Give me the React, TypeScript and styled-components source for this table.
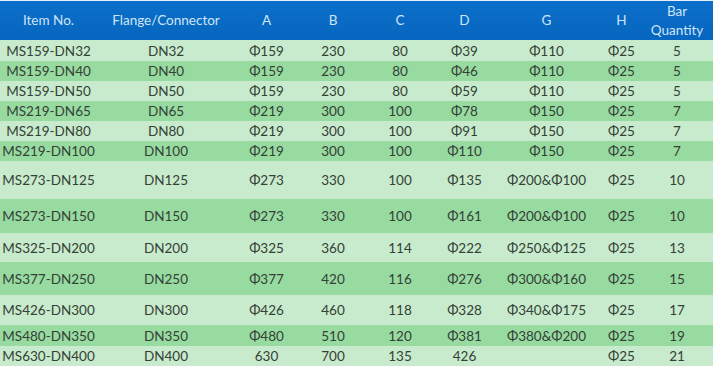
import React from "react";
import styled, { createGlobalStyle } from "styled-components";

const Global = createGlobalStyle`
  html, body { margin: 0; padding: 0; background: #ffffff; }
  body { font-family: "Lato", "Open Sans", sans-serif; }
`;

const COLS = "97px 138px 63px 70px 64px 65px 99px 51px 66px";

const Table = styled.div`
  width: 713px;
  display: flex;
  flex-direction: column;
  border-top: 1px solid #e8f2fa;
`;

const HeaderRow = styled.div`
  display: grid;
  grid-template-columns: ${COLS};
  height: 39px;
  background: linear-gradient(#0b6fc9, #0766bf);
`;

const HeadCell = styled.div<{ $pr?: number }>`
  display: flex;
  align-items: center;
  justify-content: center;
  text-align: center;
  color: #cfe5f6;
  font-size: 13.5px;
  line-height: 19px;
  padding-right: ${(p) => p.$pr ?? 0}px;
`;

const Row = styled.div<{ $h: number; $dark: boolean }>`
  display: grid;
  grid-template-columns: ${COLS};
  height: ${(p) => p.$h}px;
  background: ${(p) => (p.$dark ? "#97dba1" : "#c7ebcc")};
`;

const Cell = styled.div<{ $pr?: number }>`
  display: flex;
  align-items: center;
  justify-content: center;
  color: #354036;
  font-size: 13.5px;
  white-space: nowrap;
  padding-right: ${(p) => p.$pr ?? 0}px;
`;

const headers = ["Item No.", "Flange/Connector", "A", "B", "C", "D", "G", "H"];

const data: { h: number; v: string[] }[] = [
  { h: 21, v: ["MS159-DN32", "DN32", "Φ159", "230", "80", "Φ39", "Φ110", "Φ25", "5"] },
  { h: 20, v: ["MS159-DN40", "DN40", "Φ159", "230", "80", "Φ46", "Φ110", "Φ25", "5"] },
  { h: 20, v: ["MS159-DN50", "DN50", "Φ159", "230", "80", "Φ59", "Φ110", "Φ25", "5"] },
  { h: 20, v: ["MS219-DN65", "DN65", "Φ219", "300", "100", "Φ78", "Φ150", "Φ25", "7"] },
  { h: 20, v: ["MS219-DN80", "DN80", "Φ219", "300", "100", "Φ91", "Φ150", "Φ25", "7"] },
  { h: 20, v: ["MS219-DN100", "DN100", "Φ219", "300", "100", "Φ110", "Φ150", "Φ25", "7"] },
  { h: 38, v: ["MS273-DN125", "DN125", "Φ273", "330", "100", "Φ135", "Φ200&Φ100", "Φ25", "10"] },
  { h: 34, v: ["MS273-DN150", "DN150", "Φ273", "330", "100", "Φ161", "Φ200&Φ100", "Φ25", "10"] },
  { h: 29, v: ["MS325-DN200", "DN200", "Φ325", "360", "114", "Φ222", "Φ250&Φ125", "Φ25", "13"] },
  { h: 33, v: ["MS377-DN250", "DN250", "Φ377", "420", "116", "Φ276", "Φ300&Φ160", "Φ25", "15"] },
  { h: 30, v: ["MS426-DN300", "DN300", "Φ426", "460", "118", "Φ328", "Φ340&Φ175", "Φ25", "17"] },
  { h: 21, v: ["MS480-DN350", "DN350", "Φ480", "510", "120", "Φ381", "Φ380&Φ200", "Φ25", "19"] },
  { h: 20, v: ["MS630-DN400", "DN400", "630", "700", "135", "426", "", "Φ25", "21"] },
];

export default function App() {
  return (
    <>
      <Global />
      <Table>
        <HeaderRow>
          {headers.map((h) => (
            <HeadCell key={h}>{h}</HeadCell>
          ))}
          <HeadCell $pr={6}>
            Bar
            <br />
            Quantity
          </HeadCell>
        </HeaderRow>
        {data.map((r, i) => (
          <Row key={r.v[0]} $h={r.h} $dark={i % 2 === 1}>
            {r.v.map((c, j) => (
              <Cell key={j} $pr={j === 8 ? 6 : 0}>
                {c}
              </Cell>
            ))}
          </Row>
        ))}
      </Table>
    </>
  );
}
